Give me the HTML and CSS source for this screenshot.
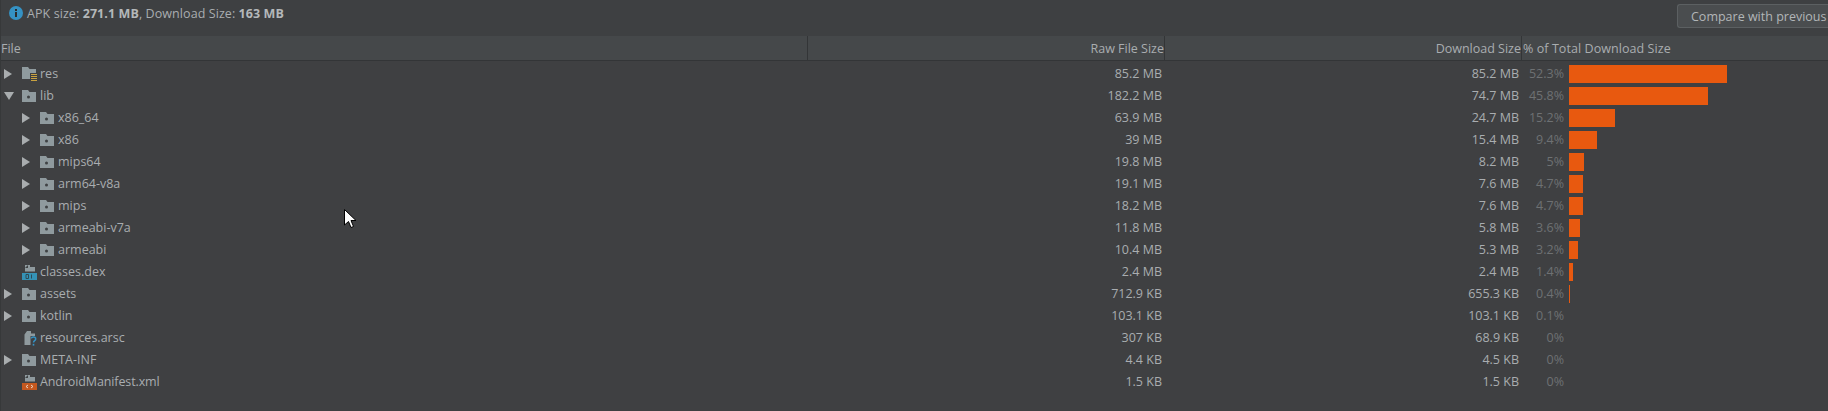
FILE: index.html
```html
<!DOCTYPE html>
<html lang="en">
<head>
<meta charset="utf-8">
<title>APK Analyzer</title>
<link rel="stylesheet" href="styles.css">
</head>
<body>
<svg class="defs" width="0" height="0" aria-hidden="true">
  <defs>
    <symbol id="folder" viewBox="0 0 14 12">
      <path d="M0 0h6l1.500 2H14v10H0z" fill="#8f9a9e"/>
      <circle cx="6.500" cy="7" r="1.500" fill="#3f4244"/>
    </symbol>
    <symbol id="tri-r" viewBox="0 0 8 10"><path d="M0 0l8 5-8 5z" fill="#a9adaf"/></symbol>
    <symbol id="tri-d" viewBox="0 0 10 8"><path d="M0 0h10L5 8z" fill="#a9adaf"/></symbol>
  </defs>
</svg>
<main class="app">
  <header class="summary">
    <div class="info">
      <svg class="info-icon" viewBox="0 0 14 14"><circle cx="7" cy="7" r="7" fill="#3592c4"/><rect x="6" y="6" width="2" height="5" fill="#2b2d2e"/><rect x="6" y="3" width="2" height="2" fill="#2b2d2e"/></svg>
      <span>APK size: <b>271.1 MB</b>, Download Size: <b>163 MB</b></span>
    </div>
    <button class="compare">Compare with previous</button>
  </header>

  <div class="grid head">
    <div class="h h-file">File</div>
    <div class="h h-right">Raw File Size</div>
    <div class="h h-right">Download Size</div>
    <div class="h h-pct">% of Total Download Size</div>
  </div>

  <div class="grid row">
    <div class="name"><svg class="arrow"><use href="#tri-r"/></svg>
      <svg class="ficon tall" viewBox="0 0 15 15"><path d="M0 0h6l1.500 2H14v4H8v6H0z" fill="#8f9a9e"/><path d="M9 7h6v1H9zM9 9h6v1H9zM9 11h6v1H9zM9 13h6v1H9z" fill="#c9a240"/></svg>res</div>
    <div class="raw">85.2 MB</div><div class="dl">85.2 MB</div>
    <div class="pct"><span class="pv">52.3%</span><span class="bar" style="width:158px"></span></div>
  </div>
  <div class="grid row">
    <div class="name"><svg class="arrow down"><use href="#tri-d"/></svg><svg class="ficon"><use href="#folder"/></svg>lib</div>
    <div class="raw">182.2 MB</div><div class="dl">74.7 MB</div>
    <div class="pct"><span class="pv">45.8%</span><span class="bar" style="width:139px"></span></div>
  </div>
  <div class="grid row">
    <div class="name child"><svg class="arrow"><use href="#tri-r"/></svg><svg class="ficon"><use href="#folder"/></svg>x86_64</div>
    <div class="raw">63.9 MB</div><div class="dl">24.7 MB</div>
    <div class="pct"><span class="pv">15.2%</span><span class="bar" style="width:46px"></span></div>
  </div>
  <div class="grid row">
    <div class="name child"><svg class="arrow"><use href="#tri-r"/></svg><svg class="ficon"><use href="#folder"/></svg>x86</div>
    <div class="raw">39 MB</div><div class="dl">15.4 MB</div>
    <div class="pct"><span class="pv">9.4%</span><span class="bar" style="width:28px"></span></div>
  </div>
  <div class="grid row">
    <div class="name child"><svg class="arrow"><use href="#tri-r"/></svg><svg class="ficon"><use href="#folder"/></svg>mips64</div>
    <div class="raw">19.8 MB</div><div class="dl">8.2 MB</div>
    <div class="pct"><span class="pv">5%</span><span class="bar" style="width:15px"></span></div>
  </div>
  <div class="grid row">
    <div class="name child"><svg class="arrow"><use href="#tri-r"/></svg><svg class="ficon"><use href="#folder"/></svg>arm64-v8a</div>
    <div class="raw">19.1 MB</div><div class="dl">7.6 MB</div>
    <div class="pct"><span class="pv">4.7%</span><span class="bar" style="width:14px"></span></div>
  </div>
  <div class="grid row">
    <div class="name child"><svg class="arrow"><use href="#tri-r"/></svg><svg class="ficon"><use href="#folder"/></svg>mips</div>
    <div class="raw">18.2 MB</div><div class="dl">7.6 MB</div>
    <div class="pct"><span class="pv">4.7%</span><span class="bar" style="width:14px"></span></div>
  </div>
  <div class="grid row">
    <div class="name child"><svg class="arrow"><use href="#tri-r"/></svg><svg class="ficon"><use href="#folder"/></svg>armeabi-v7a</div>
    <div class="raw">11.8 MB</div><div class="dl">5.8 MB</div>
    <div class="pct"><span class="pv">3.6%</span><span class="bar" style="width:11px"></span></div>
  </div>
  <div class="grid row">
    <div class="name child"><svg class="arrow"><use href="#tri-r"/></svg><svg class="ficon"><use href="#folder"/></svg>armeabi</div>
    <div class="raw">10.4 MB</div><div class="dl">5.3 MB</div>
    <div class="pct"><span class="pv">3.2%</span><span class="bar" style="width:9px"></span></div>
  </div>
  <div class="grid row">
    <div class="name leaf">
      <svg class="ficon tall" viewBox="0 0 15 15"><path d="M3 0h5v2h5v4.500H3z" fill="#8f9a9e"/><path d="M6 0L3 3h3z" fill="#3f4244"/><rect y="8" width="15" height="7" fill="#3592b5"/><path d="M4 9.500h2.500v4H4zM9.500 9.500v4" fill="none" stroke="#2e4a55"/></svg>classes.dex</div>
    <div class="raw">2.4 MB</div><div class="dl">2.4 MB</div>
    <div class="pct"><span class="pv">1.4%</span><span class="bar" style="width:4px"></span></div>
  </div>
  <div class="grid row">
    <div class="name"><svg class="arrow"><use href="#tri-r"/></svg><svg class="ficon"><use href="#folder"/></svg>assets</div>
    <div class="raw">712.9 KB</div><div class="dl">655.3 KB</div>
    <div class="pct"><span class="pv">0.4%</span><span class="bar" style="width:1px"></span></div>
  </div>
  <div class="grid row">
    <div class="name"><svg class="arrow"><use href="#tri-r"/></svg><svg class="ficon"><use href="#folder"/></svg>kotlin</div>
    <div class="raw">103.1 KB</div><div class="dl">103.1 KB</div>
    <div class="pct"><span class="pv">0.1%</span></div>
  </div>
  <div class="grid row">
    <div class="name leaf">
      <svg class="ficon tall" viewBox="0 0 15 15"><path d="M5 0h4v2.500h4V5H8.500v9h-6V3.500z" fill="#8f9a9e"/><path d="M9.300 7.500c.3-2 4.400-2 4.400.5 0 1.700-2.200 1.700-2.200 3.500" fill="none" stroke="#3592c4" stroke-width="1.500"/><rect x="10.700" y="12.800" width="1.600" height="1.800" fill="#3592c4"/></svg>resources.arsc</div>
    <div class="raw">307 KB</div><div class="dl">68.9 KB</div>
    <div class="pct"><span class="pv">0%</span></div>
  </div>
  <div class="grid row">
    <div class="name"><svg class="arrow"><use href="#tri-r"/></svg><svg class="ficon"><use href="#folder"/></svg>META-INF</div>
    <div class="raw">4.4 KB</div><div class="dl">4.5 KB</div>
    <div class="pct"><span class="pv">0%</span></div>
  </div>
  <div class="grid row">
    <div class="name leaf tight">
      <svg class="ficon tall" viewBox="0 0 15 15"><path d="M3 0h5v2h5v4.500H3z" fill="#8f9a9e"/><path d="M6 0L3 3h3z" fill="#3f4244"/><rect y="8" width="15" height="7" fill="#c4581f"/><path d="M6 10l-2 1.500L6 13M9 10l2 1.500L9 13" fill="none" stroke="#e8d5c8"/></svg>AndroidManifest.xml</div>
    <div class="raw">1.5 KB</div><div class="dl">1.5 KB</div>
    <div class="pct"><span class="pv">0%</span></div>
  </div>
</main>
<svg class="cursor" viewBox="0 0 12 19"><path d="M.5.500v15.500l4-3.500 2.500 6 2.500-1-2.500-6h5z" fill="#fff" stroke="#000"/></svg>
</body>
</html>
```
FILE: styles.css
```css
html, body {
  margin: 0;
  height: 100%;
  background: #3f4042;
  overflow: hidden;
}
body {
  position: relative;
  font-family: "Open Sans", "Noto Sans", sans-serif;
  font-size: 12.5px;
  color: #a9adb0;
}
.defs { position: absolute; }
.app {
  width: 1828px;
  height: 411px;
  overflow: hidden;
  box-sizing: border-box;
  border-left: 1px solid #37393a;
}
.summary {
  height: 36px;
  display: flex;
  justify-content: space-between;
  align-items: flex-start;
  background: #3e4042;
}
.info {
  display: flex;
  align-items: center;
  gap: 4px;
  height: 25px;
  padding-left: 8px;
  white-space: nowrap;
  letter-spacing: 0.08px;
}
.info span { padding-top: 1px; }
.info b { font-weight: 700; color: #b4b8ba; }
.info-icon { width: 14px; height: 14px; flex: none; }
.compare {
  flex: none;
  width: 151px;
  height: 24px;
  margin-top: 4px;
  padding: 0 0 0 13px;
  text-align: left;
  font: inherit;
  color: #b2b6b8;
  white-space: nowrap;
  overflow: hidden;
  background: #4a4d4f;
  border: 1px solid #5c6062;
  border-right: 0;
  border-radius: 3px 0 0 3px;
}
.grid {
  display: grid;
  grid-template-columns: 807px 357px 357px 1fr;
}
.head {
  height: 24px;
  background: #45484a;
  border-bottom: 1px solid #333537;
  margin-bottom: 2px;
}
.h {
  line-height: 25px;
  white-space: nowrap;
  color: #a9adb0;
  box-shadow: inset -1px 0 0 #333537;
  padding-right: 1px;
}
.h-right { text-align: right; }
.h-pct { box-shadow: none; padding-left: 1px; letter-spacing: 0.07px; }
.row { height: 22px; line-height: 22px; }
.name {
  display: flex;
  align-items: center;
  white-space: nowrap;
  padding-left: 3px;
}
.child { padding-left: 21px; }
.leaf { padding-left: 21px; }
.tight { letter-spacing: -0.12px; }
.arrow { width: 8px; height: 10px; margin-right: 10px; flex: none; }
.arrow.down { width: 10px; height: 8px; margin-right: 8px; }
.ficon { width: 14px; height: 12px; margin-right: 4px; flex: none; }
.ficon.tall { width: 15px; height: 15px; margin-right: 3px; }
.raw, .dl { text-align: right; padding-right: 3px; }
.pct { display: flex; align-items: center; }
.pv { width: 42px; text-align: right; color: #6e7173; flex: none; margin-right: 5px; }
.bar { height: 18px; background: #e8590f; display: block; }
.cursor {
  position: absolute;
  left: 344px;
  top: 209px;
  width: 12px;
  height: 19px;
}
```
